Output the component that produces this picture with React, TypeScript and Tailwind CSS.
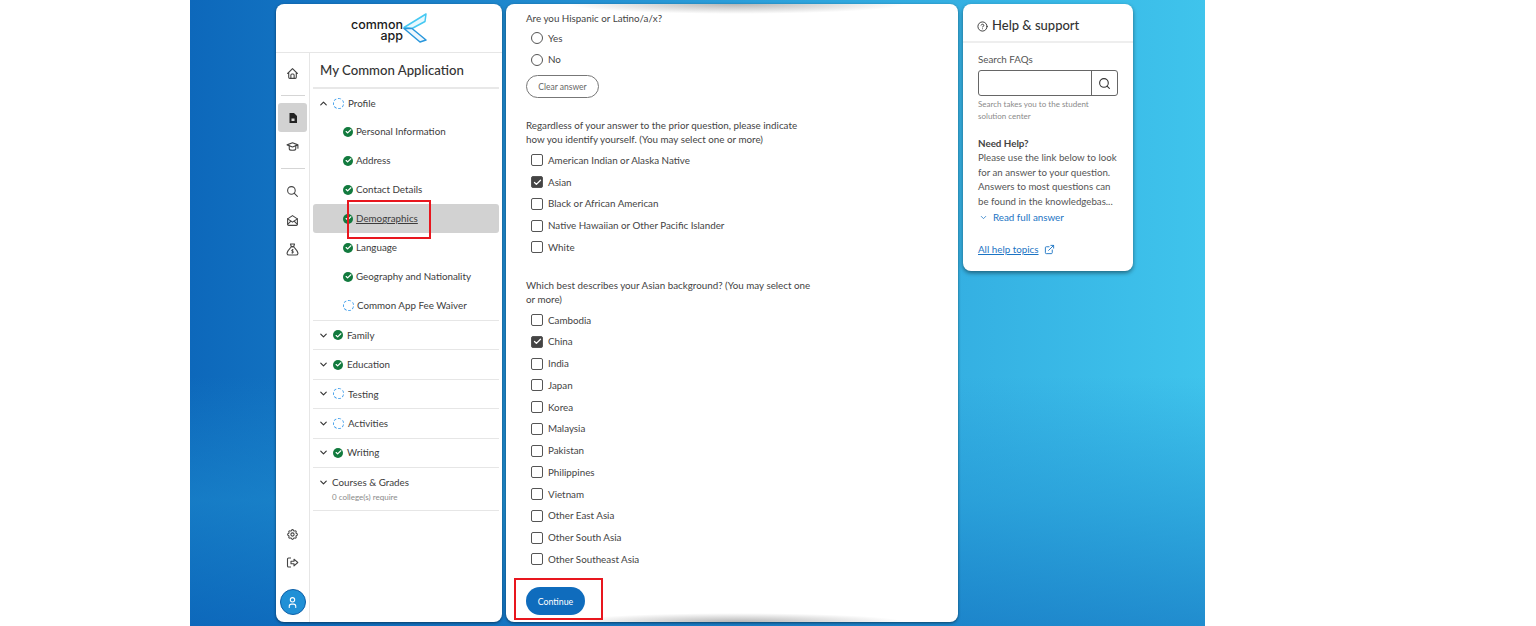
import { ChevronDown, ChevronUp, Check, CircleHelp, ExternalLink, Search } from "lucide-react";
import { TbHome, TbSchool, TbSearch, TbMailOpened, TbSettings, TbUser } from "react-icons/tb";

const races = ["American Indian or Alaska Native", "Asian", "Black or African American", "Native Hawaiian or Other Pacific Islander", "White"];
const regions = ["Cambodia", "China", "India", "Japan", "Korea", "Malaysia", "Pakistan", "Philippines", "Vietnam", "Other East Asia", "Other South Asia", "Other Southeast Asia"];
const checked = ["Asian", "China"];

function Done() {
  return (
    <span className="flex h-[10px] w-[10px] shrink-0 items-center justify-center rounded-full bg-[#127a3e]">
      <Check className="h-[7px] w-[7px] text-white" strokeWidth={4} />
    </span>
  );
}

function Pending() {
  return <span className="h-[11px] w-[11px] shrink-0 rounded-full border-[1.5px] border-dashed border-[#4aa3ec]" />;
}

function SubItem({ label, done = true, active = false }: { label: string; done?: boolean; active?: boolean }) {
  return (
    <div className={`flex h-[29px] items-center gap-[3px] rounded-[3px] pl-[30px] ${active ? "bg-[#d2d2d2]" : ""}`}>
      {done ? <Done /> : <Pending />}
      <span className={`text-[9.8px] text-[#3c3c3c] ${active ? "underline" : ""}`}>{label}</span>
    </div>
  );
}

function Section({ label, done }: { label: string; done: boolean }) {
  return (
    <div className="flex h-[29.4px] items-center gap-[4px] border-b border-[#e6e6e6] pl-[5px]">
      <ChevronDown className="h-[11px] w-[11px] text-[#333]" strokeWidth={2.5} />
      {done ? <Done /> : <Pending />}
      <span className="text-[9.8px] text-[#3c3c3c]">{label}</span>
    </div>
  );
}

function Rail() {
  return (
    <div className="flex w-[34px] shrink-0 flex-col items-center border-r border-[#e6e6e6] pt-[14px] pb-[7px] text-[#444]">
      <TbHome className="h-[13px] w-[13px]" />
      <div className="mt-[15px] h-px w-[24px] bg-[#d5d5d5]" />
      <div className="mt-[7px] flex h-[29px] w-[29px] items-center justify-center rounded-[3px] bg-[#d2d2d2]">
        <svg viewBox="0 0 12 12" className="h-[12px] w-[12px]">
          <path d="M2.5 1h4.5l3 3v7h-7.5z" fill="#222" />
          <rect x="4.5" y="6.5" width="3" height="2.5" fill="#d2d2d2" />
        </svg>
      </div>
      <TbSchool className="mt-[8px] h-[13px] w-[13px]" />
      <div className="mt-[15px] h-px w-[24px] bg-[#d5d5d5]" />
      <TbSearch className="mt-[16px] h-[13px] w-[13px]" />
      <TbMailOpened className="mt-[16px] h-[13px] w-[13px]" />
      <svg viewBox="0 0 13 13" fill="none" stroke="currentColor" strokeWidth="1.1" strokeLinejoin="round" className="mt-[16px] h-[13px] w-[13px]">
        <path d="M4.5 1h4L7.7 3.6H5.3z" />
        <path d="M5.3 3.6h2.4c.6 1.5 4.3 4 4.3 6.6 0 1.2-.8 1.8-2 1.8H3c-1.2 0-2-.6-2-1.8 0-2.6 3.7-5.1 4.3-6.6z" />
        <path d="M6.5 6v4.5M7.6 6.8H6a.8.8 0 0 0 0 1.5h1a.8.8 0 0 1 0 1.5H5.4" strokeWidth="0.8" />
      </svg>
      <TbSettings className="mt-auto h-[13px] w-[13px]" />
      <svg viewBox="0 0 13 13" fill="none" stroke="currentColor" strokeWidth="1.1" className="mt-[15px] h-[13px] w-[13px]">
        <path d="M5 2H2.5a1 1 0 0 0-1 1v7a1 1 0 0 0 1 1H5" />
        <path d="M5 5.2h3V3.2l3.8 3.3L8 9.8V7.8H5z" strokeLinejoin="round" />
      </svg>
      <div className="mt-[20px] flex h-[26px] w-[26px] items-center justify-center rounded-full border border-[#0c5fa8] bg-[#2090d6]">
        <TbUser className="h-[13px] w-[13px] text-white" />
      </div>
    </div>
  );
}

function NavPanel() {
  return (
    <div className="relative flex w-[226px] shrink-0 flex-col rounded-[8px] bg-white shadow-[0_1px_3px_rgba(0,0,0,0.5)]">
      <div className="flex h-[49px] items-center justify-center border-b border-[#e6e6e6]">
        <div className="flex items-center">
          <div className="mt-[3px] flex flex-col items-end text-[12.5px] leading-[11px] font-medium text-[#1a1a1a] [font-family:Inter,sans-serif]">
            <span>common</span>
            <span>app</span>
          </div>
          <svg viewBox="0 0 24 30" className="h-[30px] w-[24px]" fill="none">
            <path d="M1 14.5 L23 1 L22 8.5 L9 15.5 Z" fill="#e6f8fe" stroke="#45c8f2" strokeWidth="1.5" strokeLinejoin="round" />
            <path d="M1 15.5 L9 15.5 L23 27 L17 29 Z" fill="#eef7fd" stroke="#2a97dc" strokeWidth="1.5" strokeLinejoin="round" />
          </svg>
        </div>
      </div>
      <div className="flex min-h-0 flex-1">
        <Rail />
        <div className="min-w-0 flex-1 px-[3px]">
          <div className="flex h-[36px] items-center border-b-2 border-[#e8e8e8] pt-[2px] pl-[7px] text-[13.2px] font-medium text-[#333]">
            My Common Application
          </div>
          <div className="flex h-[28px] items-center gap-[4px] pl-[5px]">
            <ChevronUp className="h-[11px] w-[11px] text-[#333]" strokeWidth={2.5} />
            <Pending />
            <span className="text-[9.8px] text-[#3c3c3c]">Profile</span>
          </div>
          <SubItem label="Personal Information" />
          <SubItem label="Address" />
          <SubItem label="Contact Details" />
          <SubItem label="Demographics" active />
          <SubItem label="Language" />
          <SubItem label="Geography and Nationality" />
          <SubItem label="Common App Fee Waiver" done={false} />
          <div className="h-0 border-b border-[#e6e6e6]" />
          <Section label="Family" done />
          <Section label="Education" done />
          <Section label="Testing" done={false} />
          <Section label="Activities" done={false} />
          <Section label="Writing" done />
          <div className="flex h-[43px] items-start gap-[3px] border-b border-[#e6e6e6] pt-[8px] pl-[5px]">
            <ChevronDown className="mt-px h-[11px] w-[11px] text-[#333]" strokeWidth={2.5} />
            <div>
              <div className="text-[9.8px] leading-[12px] text-[#3c3c3c]">Courses &amp; Grades</div>
              <div className="mt-[4px] text-[8px] leading-[10px] text-[#8a8a8a]">0 college(s) require</div>
            </div>
          </div>
        </div>
      </div>
      <div className="absolute top-[196px] left-[71px] h-[39px] w-[84px] border-2 border-[#e8161e]" />
    </div>
  );
}

function Radio({ label }: { label: string }) {
  return (
    <div className="flex h-[21.7px] items-center gap-[5px] pl-[5px]">
      <span className="h-[12px] w-[12px] rounded-full border border-[#555]" />
      <span className="text-[9.8px] text-[#444]">{label}</span>
    </div>
  );
}

function Box({ label }: { label: string }) {
  const on = checked.includes(label);
  return (
    <div className="flex h-[21.75px] items-center gap-[5px] pl-[5px]">
      <span className={`flex h-[12px] w-[12px] items-center justify-center rounded-[2px] border border-[#555] ${on ? "bg-[#444]" : ""}`}>
        {on && <Check className="h-[9px] w-[9px] text-white" strokeWidth={3.5} />}
      </span>
      <span className="text-[9.8px] text-[#444]">{label}</span>
    </div>
  );
}

function FormPanel() {
  return (
    <div className="relative w-[452px] shrink-0 overflow-hidden rounded-[8px] bg-white pt-[7px] pl-[20px] shadow-[0_1px_3px_rgba(0,0,0,0.5)]">
      <div className="absolute top-0 left-[60px] h-[10px] w-[340px] bg-[radial-gradient(ellipse_at_top,#b5b5b5,transparent_70%)]" />
      <div className="absolute bottom-0 left-[60px] h-[9px] w-[340px] bg-[radial-gradient(ellipse_at_bottom,#b5b5b5,transparent_70%)]" />
      <p className="relative text-[9.8px] leading-[14px] text-[#444]">Are you Hispanic or Latino/a/x?</p>
      <div className="mt-[2px]">
        <Radio label="Yes" />
        <Radio label="No" />
      </div>
      <button className="mt-[5px] flex h-[23px] w-[73px] items-center justify-center rounded-full border border-[#777] text-[8.5px] text-[#666]">
        Clear answer
      </button>
      <p className="mt-[20px] w-[292px] text-[9.8px] leading-[14px] text-[#444]">
        Regardless of your answer to the prior question, please indicate how you identify yourself. (You may select one or more)
      </p>
      <div className="mt-[3px]">
        {races.map((r) => <Box key={r} label={r} />)}
      </div>
      <p className="mt-[20px] w-[290px] text-[9.8px] leading-[14px] text-[#444]">
        Which best describes your Asian background? (You may select one or more)
      </p>
      <div className="mt-[3px]">
        {regions.map((r) => <Box key={r} label={r} />)}
      </div>
      <button className="relative mt-[17px] flex h-[28px] w-[59px] items-center justify-center rounded-full bg-[#0f6cbd] text-[8.8px] text-white">
        Continue
      </button>
      <div className="absolute top-[574px] left-[8px] h-[42px] w-[89px] border-2 border-[#e8161e]" />
    </div>
  );
}

function HelpPanel() {
  return (
    <div className="h-[267px] w-[170px] shrink-0 rounded-[8px] bg-white shadow-[0_2px_4px_rgba(0,0,0,0.45)]">
      <div className="flex h-[39px] items-center gap-[4px] border-b-2 border-[#eeeeee] pt-[7px] pl-[14px] text-[13px] font-medium text-[#333]">
        <CircleHelp className="h-[11px] w-[11px]" />
        Help &amp; support
      </div>
      <div className="px-[15px] pt-[10px]">
        <div className="text-[9.8px] leading-[13px] text-[#555]">Search FAQs</div>
        <div className="mt-[4px] flex h-[26px] w-[140px] rounded-[3px] border border-[#666]">
          <div className="flex-1" />
          <div className="flex w-[26px] items-center justify-center border-l border-[#666]">
            <Search className="h-[13px] w-[13px] text-[#333]" />
          </div>
        </div>
        <p className="mt-[2px] text-[8px] leading-[12px] whitespace-nowrap text-[#8a8a8a]">
          Search takes you to the student<br />solution center
        </p>
        <div className="mt-[14px] text-[9.8px] leading-[14px] font-bold text-[#444]">Need Help?</div>
        <p className="text-[9.7px] leading-[14.5px] whitespace-nowrap text-[#555]">
          Please use the link below to look<br />for an answer to your question.<br />Answers to most questions can<br />be found in the knowledgebas...
        </p>
        <div className="mt-[2px] flex items-center gap-[5px] pl-px text-[9.8px] leading-[14px] text-[#1b74c4]">
          <ChevronDown className="h-[9px] w-[9px]" />
          Read full answer
        </div>
        <div className="mt-[18px] flex items-center gap-[5px] text-[9.8px] leading-[14px] text-[#1b74c4]">
          <span className="underline">All help topics</span>
          <ExternalLink className="h-[11px] w-[11px]" />
        </div>
      </div>
    </div>
  );
}

export default function App() {
  return (
    <div className="h-[626px] w-[1536px] overflow-hidden bg-white pl-[190px] [font-family:Lato,'Noto_Sans',sans-serif]">
      <div className="relative h-full w-[1015px] overflow-hidden bg-gradient-to-r from-[#0d68bb] via-[#2a9bd8] to-[#3fc4ec]">
        <div className="absolute right-0 bottom-0 left-0 h-[250px] bg-gradient-to-b from-transparent via-[#1f8fd0]/50 to-[#0d68bb]/60" />
        <div className="relative flex h-full gap-[4px] py-[4px] pl-[86px]">
          <NavPanel />
          <FormPanel />
          <div className="ml-px">
            <HelpPanel />
          </div>
        </div>
      </div>
    </div>
  );
}
